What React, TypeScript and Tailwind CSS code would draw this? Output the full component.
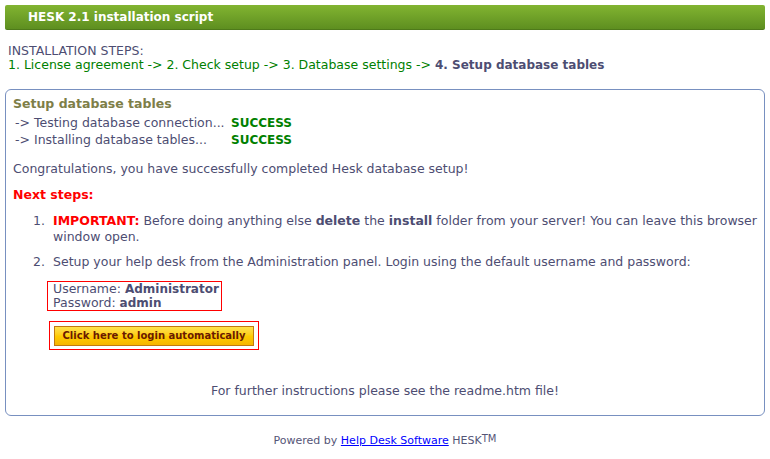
import React from 'react';

const font = { fontFamily: '"DejaVu Sans", Verdana, sans-serif' };

const App: React.FC = () => {
  return (
    <div className="w-[770px] h-[459px] bg-white text-[12.5px] leading-[14px] text-[#4d4d72]" style={font}>
      <div className="px-[5px] pt-[5px]">
        {/* title bar */}
        <div className="h-[25px] rounded-[2px] border-b border-[#4e7a1a] bg-gradient-to-b from-[#82b431] to-[#5e8f20] pl-[23px] flex items-center">
          <span className="text-white font-bold text-[12px]">HESK 2.1 installation script</span>
        </div>

        <div className="mt-[14px] pl-[3px]">
          <div>INSTALLATION STEPS:</div>
          <div className="text-[#008000]">
            1. License agreement -&gt; 2. Check setup -&gt; 3. Database settings -&gt;{' '}
            <span className="font-bold text-[#4d4d72] text-[12px]">4. Setup database tables</span>
          </div>
        </div>

        {/* main panel */}
        <div className="mt-[17px] h-[327px] rounded-[6px] border border-[#7890c0] px-[7px] pt-[7px] flex flex-col">
          <div className="font-bold text-[12.5px] text-[#7e7e48]">Setup database tables</div>
          <div className="mt-[5px] flex flex-col gap-[3px]">
            <div className="flex">
              <span className="w-[218px] pl-[2px]">-&gt; Testing database connection...</span>
              <span className="font-bold text-[12px] text-[#008000]">SUCCESS</span>
            </div>
            <div className="flex">
              <span className="w-[218px] pl-[2px]">-&gt; Installing database tables...</span>
              <span className="font-bold text-[12px] text-[#008000]">SUCCESS</span>
            </div>
          </div>

          <p className="mt-[15px]">Congratulations, you have successfully completed Hesk database setup!</p>

          <p className="mt-[12px] font-bold text-[12.5px] text-[#ff0000]">Next steps:</p>

          <ol className="mt-[11px] pl-[36px] list-decimal leading-[16px]">
            <li className="pl-[4px]">
              <span className="font-bold text-[#ff0000]">IMPORTANT:</span> Before doing anything else{' '}
              <span className="font-bold">delete</span> the <span className="font-bold">install</span> folder from your
              server! You can leave this browser window open.
            </li>
            <li className="pl-[4px] mt-[9px]">
              Setup your help desk from the Administration panel. Login using the default username and password:
            </li>
          </ol>

          {/* default credentials */}
          <div className="mt-[11px] ml-[34px] w-fit border border-[#ff0000] pl-[5px] pr-[2px] whitespace-nowrap">
            <div>
              Username: <span className="font-bold text-[12px]">Administrator</span>
            </div>
            <div>
              Password: <span className="font-bold text-[12px]">admin</span>
            </div>
          </div>

          <div className="mt-[10px] ml-[36px] w-[210px] h-[29px] border border-[#ff0000] flex items-center justify-center">
            <button
              className="w-[200px] h-[20px] border border-[#c07a10] bg-gradient-to-b from-[#ffe24a] via-[#ffcc00] to-[#f7b500] text-[#6a1a00] font-bold text-[10px] leading-none whitespace-nowrap"
              style={font}
            >
              Click here to login automatically
            </button>
          </div>

          <p className="mt-auto mb-[17px] text-center">For further instructions please see the readme.htm file!</p>
        </div>

        <div className="mt-[18px] text-center text-[11px] text-[#555577]">
          Powered by <span className="text-[#0000ff] underline">Help Desk Software</span> HESK
          <sup className="text-[10px] relative -top-[2px]">TM</sup>
        </div>
      </div>
    </div>
  );
};

export default App;
